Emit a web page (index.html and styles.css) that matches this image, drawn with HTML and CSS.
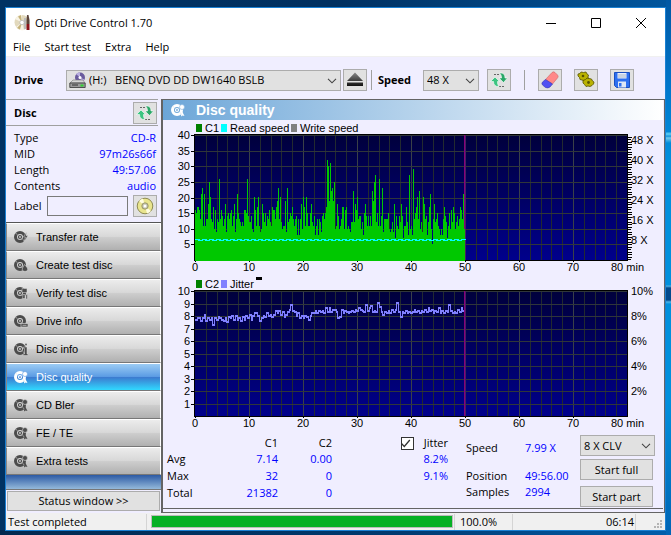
FILE: index.html
```html
<!DOCTYPE html>
<html lang="en">
<head>
<meta charset="utf-8">
<title>Opti Drive Control 1.70</title>
<link rel="stylesheet" href="styles.css">
</head>
<body>
<svg class="defs" aria-hidden="true">
  <defs>
    <linearGradient id="plot" x1="0" y1="0" x2="0" y2="1"><stop offset="0" stop-color="#00003c"/><stop offset="1" stop-color="#00008c"/></linearGradient>
    <linearGradient id="metal" x1="0" y1="0" x2="0" y2="1"><stop offset="0" stop-color="#888"/><stop offset="1" stop-color="#111"/></linearGradient>
    <symbol id="i-chevron" viewBox="0 0 10 6"><path d="M1 .8 5 4.8 9 .8" fill="none" stroke="#444" stroke-width="1.1"/></symbol>
    <symbol id="i-refresh" viewBox="0 0 18 18">
      <path d="M4 3.500h5M9 15.500h5" fill="none" stroke="#666" stroke-dasharray="2 1"/>
      <path d="M.5 10.500 5 6l4.500 4.500H7.500c0 2 .3 3.500 1.500 5-3.500.3-5.500-1.500-5.500-5z" fill="#3cc481" stroke="#fff" stroke-width=".6"/>
      <path d="M17.500 7 13.500 11.500 9 7h2.500c0-2-.5-3.500-2-5 4-.3 5.500 1.500 5.500 5z" fill="#2aa868" stroke="#fff" stroke-width=".6"/>
    </symbol>
    <symbol id="i-disc" viewBox="0 0 14 14">
      <circle cx="6" cy="7" r="4.500" fill="none" stroke="currentColor" stroke-width="3"/>
      <circle cx="6" cy="7" r="1.500" fill="none" stroke="currentColor" stroke-width="1.200"/>
      <path d="M3 4.500 1.800 3.200M9 9.500l1.500 1.500" stroke="#ddd" stroke-width=".8"/>
    </symbol>
  </defs>
</svg>
<div class="window">
  <header class="titlebar">
    <svg class="app-icon" viewBox="0 0 17 17"><circle cx="8" cy="8.500" r="7.500" fill="#e2d9bd"/><path d="M8 8.500 1 5A7.500 7.500 0 0 1 8 1zM8 8.500 10 16a7.500 7.500 0 0 1-8-3z" fill="#f8f3e4"/><path d="M8 8.500 4 2.500 7 1zM8 8.500 3 14l3 1.500z" fill="#c5b27a"/><circle cx="8" cy="8.500" r="2.200" fill="#fff" stroke="#aaa" stroke-width=".6"/><path d="M10 4h2v11h-2z" fill="#bbb"/><path d="M13 1h1.500l1 5v4h-3V6z" fill="#5a4238"/><path d="M12.500 10h3v6h-3z" fill="#8d1219"/></svg>
    <h1>Opti Drive Control 1.70</h1>
    <div class="caption">
      <button type="button" aria-label="Minimize"><svg viewBox="0 0 12 12"><path d="M1 6.500h10" stroke="#000"/></svg></button>
      <button type="button" aria-label="Maximize"><svg viewBox="0 0 12 12"><path d="M1.500 1.500h9v9h-9z" fill="none" stroke="#000"/></svg></button>
      <button type="button" aria-label="Close"><svg viewBox="0 0 12 12"><path d="m1 1 10 10M11 1 1 11" stroke="#000"/></svg></button>
    </div>
  </header>
  <nav class="menu"><button type="button">File</button><button type="button">Start test</button><button type="button">Extra</button><button type="button">Help</button></nav>

  <div class="toolbar">
    <label class="bold drive-label" for="drive">Drive</label>
    <div class="combo drive">
      <svg class="drive-icon" viewBox="0 0 17 17"><circle cx="11" cy="5.500" r="5" fill="#6a5c9e"/><path d="M11 5.500 7 2a5 5 0 0 1 4-1.500zM11 5.500l4.500 2a5 5 0 0 1-3 3z" fill="#b9aee0"/><circle cx="11" cy="5.500" r="1.500" fill="#fff"/><path d="M4 8h10l2 3H1z" fill="#d5d5d5" stroke="#777" stroke-width=".6"/><path d="M.8 11h15.400v4.500H.8z" fill="#9a9a9a" stroke="#333" stroke-width=".8"/><path d="M3 13h6" stroke="#333"/><path d="M11.500 12.500h3v2h-3z" fill="#2bd42b"/></svg>
      <select id="drive"><option>(H:)&nbsp;&nbsp; BENQ DVD DD DW1640 BSLB</option></select>
      <svg class="chevron"><use href="#i-chevron"/></svg>
    </div>
    <button class="tool eject" type="button" aria-label="Eject"><svg viewBox="0 0 18 18"><path d="M9 1.500 17 10H1zM1 11.500h16v3.500H1z" fill="url(#metal)"/></svg></button>
    <span class="sep"></span>
    <label class="bold speed-label" for="speed">Speed</label>
    <div class="combo speed"><select id="speed"><option>48 X</option></select><svg class="chevron"><use href="#i-chevron"/></svg></div>
    <button class="tool" type="button" aria-label="Refresh speeds"><svg><use href="#i-refresh"/></svg></button>
    <span class="sep wide"></span>
    <button class="tool spaced" type="button" aria-label="Erase"><svg viewBox="0 0 18 18"><path d="M4.500 8.500 11 1.500q1.500-1.300 3 0l2.500 2.500q1.200 1.200.2 2.700L11.500 13z" fill="#ff8888" stroke="#c66" stroke-width=".6"/><path d="M4.500 8.500 11.500 13 9 16q-2 1.500-4.500.5L1.500 14q-1.200-1.500 0-3z" fill="#4f4ff2" stroke="#3333b0" stroke-width=".6"/></svg></button>
    <button class="tool spaced" type="button" aria-label="Options"><svg viewBox="0 0 18 18"><g fill="#b9b200" stroke="#565200" stroke-width=".8"><path d="m1 3 2-.5L4 1l2.500.500L9 1l1 2 1.500 1-.5 2 .5 2-2.500.5L7.500 10 5 9l-2-.500L2.500 6.500 1 5z"/><path d="m6 9.500 2.500-1L10 7l2 .5 2.500.5 1 2 1.500 1-.5 2-1.500 1.500-2 1-2-.5-2 .5-1.500-2-1.500-1.500z"/></g><circle cx="6" cy="5" r="1.300" fill="#565200"/><circle cx="11.500" cy="11.500" r="1.400" fill="#565200"/></svg></button>
    <button class="tool spaced" type="button" aria-label="Save"><svg viewBox="0 0 18 18"><path d="M1.500 1.500h15v15h-13l-2-2z" fill="#2c6ff0" stroke="#1a4fc0"/><path d="M4.500 2h9v5.500h-9z" fill="#e8eefc"/><path d="M5 4h8M5 6h8" stroke="#9ab" stroke-width=".8"/><path d="M5 10.500h8v6H5z" fill="#dde6f5"/><path d="M6 12h2.500v3.500H6z" fill="#2c6ff0"/></svg></button>
  </div>

  <div class="body">
    <aside class="sidebar">
      <div class="disc-head"><h2 class="bold">Disc</h2><button class="tool" type="button" aria-label="Refresh disc"><svg><use href="#i-refresh"/></svg></button></div>
      <dl class="disc-info">
        <div><dt>Type</dt><dd>CD-R</dd></div>
        <div><dt>MID</dt><dd>97m26s66f</dd></div>
        <div><dt>Length</dt><dd>49:57.06</dd></div>
        <div><dt>Contents</dt><dd>audio</dd></div>
      </dl>
      <div class="label-row"><label for="label">Label</label><input id="label" type="text"><button class="tool" type="button" aria-label="Read label"><svg viewBox="0 0 18 18"><circle cx="9" cy="9" r="7.800" fill="#e9e58e" stroke="#77743a" stroke-width=".8"/><path d="M9 9 3 4a8 8 0 0 1 4-2.500zM9 9l6 5a8 8 0 0 1-4 2.500z" fill="#fffde0"/><circle cx="9" cy="9" r="3.200" fill="#c5c5b0" stroke="#77743a" stroke-width=".6"/><circle cx="9" cy="9" r="1.500" fill="#fff"/></svg></button></div>
      <nav class="tests">
        <button type="button"><svg viewBox="0 0 14 14"><use href="#i-disc"/><path d="m12.500 2-3 5h2l-1.500 5 4-6.500h-2z" fill="currentColor" stroke="#ddd" stroke-width=".5"/></svg>Transfer rate</button>
        <button type="button"><svg viewBox="0 0 14 14"><use href="#i-disc"/><path d="M10.500 6.500 13.500 10q1 3-2.500 3.500Q7.500 13 8.500 10z" fill="currentColor" stroke="#ddd" stroke-width=".6"/></svg>Create test disc</button>
        <button type="button"><svg viewBox="0 0 14 14"><use href="#i-disc"/><path d="M8 2.500h5v4H8zM9 8.500h2v4H8.500zM12 8.500h1.500v4.500H12z" fill="currentColor" stroke="#ddd" stroke-width=".5"/></svg>Verify test disc</button>
        <button type="button"><svg viewBox="0 0 14 14"><use href="#i-disc"/><path d="M7 9.500h7v3.500H7z" fill="currentColor" stroke="#ddd" stroke-width=".6"/><path d="M8.500 11.300h4" stroke="#ddd" stroke-width=".7"/></svg>Drive info</button>
        <button type="button"><svg viewBox="0 0 14 14"><use href="#i-disc"/><path d="M11 1.500h2v2h-2zM9.500 5H13v7h1v1.500H9V12h1.500V6.500h-1z" fill="currentColor" stroke="#ddd" stroke-width=".5"/></svg>Disc info</button>
        <button type="button" class="active" aria-current="page"><svg viewBox="0 0 14 14"><use href="#i-disc"/><circle cx="11" cy="4" r="2.500" fill="currentColor" stroke="#5a9be0" stroke-width=".6"/><path d="m10.500 7 3 6-2-.5-1.500 1z" fill="currentColor"/></svg>Disc quality</button>
        <button type="button"><svg viewBox="0 0 14 14"><use href="#i-disc"/><circle cx="11" cy="4" r="2.500" fill="currentColor" stroke="#ddd" stroke-width=".6"/><path d="m10.500 7 3 6-2-.5-1.500 1z" fill="currentColor"/></svg>CD Bler</button>
        <button type="button"><svg viewBox="0 0 14 14"><use href="#i-disc"/><circle cx="11" cy="4" r="2.500" fill="currentColor" stroke="#ddd" stroke-width=".6"/><path d="m10.500 7 3 6-2-.5-1.500 1z" fill="currentColor"/></svg>FE / TE</button>
        <button type="button"><svg viewBox="0 0 14 14"><use href="#i-disc"/><circle cx="11" cy="4" r="2.500" fill="currentColor" stroke="#ddd" stroke-width=".6"/><path d="m10.500 7 3 6-2-.5-1.500 1z" fill="currentColor"/></svg>Extra tests</button>
      </nav>
      <button class="push status-btn" type="button">Status window &gt;&gt;</button>
    </aside>

    <main class="panel">
      <div class="panel-in">
        <div class="panel-head"><svg viewBox="0 0 14 14"><use href="#i-disc"/><circle cx="11" cy="4" r="2.500" fill="#fff" stroke="#7fb2dd" stroke-width=".6"/><path d="m10.500 7 3 6-2-.5-1.500 1z" fill="#fff"/></svg><h2>Disc quality</h2></div>
        <svg class="chart" id="chart-c1" viewBox="163 120 500 157" role="img" aria-label="C1 errors"></svg>
        <svg class="chart" id="chart-jitter" viewBox="163 277 500 153" role="img" aria-label="C2 errors and jitter"></svg>
        <div class="results">
          <table class="stats">
            <thead><tr><td></td><th scope="col">C1</th><th scope="col">C2</th><th scope="col" class="jit"><label><input type="checkbox" checked><svg class="tick" viewBox="0 0 13 13"><path d="m2.500 6.500 2.800 3 5.500-6.500" fill="none" stroke="#333" stroke-width="1.300"/></svg>Jitter</label></th></tr></thead>
            <tbody>
              <tr><th scope="row">Avg</th><td>7.14</td><td>0.00</td><td>8.2%</td></tr>
              <tr><th scope="row">Max</th><td>32</td><td>0</td><td>9.1%</td></tr>
              <tr><th scope="row">Total</th><td>21382</td><td>0</td><td></td></tr>
            </tbody>
          </table>
          <dl class="progress-info">
            <dt class="first">Speed</dt><dd class="first">7.99 X</dd>
            <dt>Position</dt><dd>49:56.00</dd>
            <dt>Samples</dt><dd>2994</dd>
          </dl>
          <div class="actions">
            <div class="combo"><select aria-label="Test speed"><option>8 X CLV</option></select><svg class="chevron"><use href="#i-chevron"/></svg></div>
            <button class="push" type="button">Start full</button>
            <button class="push last" type="button">Start part</button>
          </div>
        </div>
      </div>
    </main>
  </div>

  <footer class="statusbar">
    <span class="msg">Test completed</span>
    <div class="bar" role="progressbar" aria-valuenow="100" aria-label="Test progress"><div class="fill"></div></div>
    <span class="pct">100.0%</span>
    <span class="time">06:14</span>
    <svg class="grip" viewBox="0 0 9 9"><path d="M6 0h2v2H6zM3 3h2v2H3zM6 3h2v2H6zM0 6h2v2H0zM3 6h2v2H3zM6 6h2v2H6z" fill="#b4b4b4"/></svg>
  </footer>
</div>
<script src="charts.js"></script>
</body>
</html>
```
FILE: styles.css
```css
* { box-sizing: border-box; }
body {
  margin: 0;
  min-height: 100vh;
  padding: 7px 5px 4px;
  font: 11px/16px "Open Sans", "Noto Sans", sans-serif;
  color: #000;
  background:
    linear-gradient(#0000 132px, #4fc3ee 133px, #4fc3ee 135px, #0b8fd8 136px, #6fc9ea 138px, #0000 143px, #0000 285px, #4fb4e6 286px, #024a8c 288px, #024a8c 300px, #4fb4e6 302px, #0000 304px) right / 5px 100% no-repeat,
    linear-gradient(#0058a4, #0078cc 90px, #0090dc 160px, #0090dc 400px, #0064b4) right / 5px 100% no-repeat,
    linear-gradient(90deg, #02284e, #003a70 60%, #005eac) bottom / 100% 5px no-repeat,
    linear-gradient(90deg, #003262, #003060 50%, #00569e);
}
h1, h2, dl, dd { margin: 0; font-size: inherit; }
button, select, input { font: inherit; color: inherit; }
.defs { position: absolute; width: 0; height: 0; }
.bold { font-weight: 700; }
.window {
  display: flex;
  flex-direction: column;
  min-height: calc(100vh - 11px);
  border: 1px solid #1a80d2;
  background: #f0eeff;
}

.titlebar { display: flex; align-items: center; height: 29px; padding: 0 2px 0 8px; background: #fff; }
.app-icon { width: 17px; height: 17px; margin-right: 4px; }
.titlebar h1 { flex: 1; font-weight: 400; font-size: 11px; }
.caption { display: flex; }
.caption button { width: 45px; height: 29px; border: 0; padding: 0; background: none; }
.caption svg { width: 12px; height: 12px; display: block; margin: auto; }
.menu { display: flex; gap: 14px; padding-left: 7px; height: 20px; background: #fff; border-bottom: 1px solid #f0f0f0; }
.menu button { border: 0; padding: 0; background: none; line-height: 20px; }

.toolbar { display: flex; align-items: center; height: 42px; padding: 4px 31px 0 8px; }
.combo { position: relative; display: flex; }
.combo select {
  appearance: none;
  width: 100%;
  height: 21px;
  padding: 0 16px 0 3px;
  border: 1px solid #acacac;
  border-radius: 0;
  background: #e1e1e1;
}
.chevron { position: absolute; right: 4px; top: 8px; width: 10px; height: 6px; pointer-events: none; }
.drive-label { width: 52px; }
.drive { flex: 1; }
.drive select { padding-left: 22px; }
.drive-icon { position: absolute; left: 3px; top: 2px; width: 17px; height: 17px; }
.tool {
  flex: none;
  display: grid;
  place-items: center;
  width: 24px;
  height: 22px;
  padding: 0;
  border: 1px solid #acacac;
  background: #e1e1e1;
}
.tool svg { width: 18px; height: 18px; }
.eject { margin: 0 4px 0 2px; }
.sep { width: 1px; height: 20px; background: #a0a0a0; }
.sep.wide { margin: 0 1px 0 13px; }
.speed-label { width: 45px; margin-left: 6px; }
.speed { width: 56px; margin-right: 8px; }
.tool.spaced { margin-left: 12px; }

.body { flex: 1; display: flex; }
.sidebar { width: 155px; display: flex; flex-direction: column; }
.disc-head {
  display: flex;
  justify-content: space-between;
  align-items: center;
  height: 27px;
  margin-right: 3px;
  padding: 0 1px 0 8px;
  border-top: 1px solid #a0a0a0;
  border-bottom: 1px solid #a0a0a0;
}
.disc-info { padding: 4px 5px 0 8px; }
.disc-info div { display: flex; justify-content: space-between; }
dd, .stats tbody td { color: #00f; }
.label-row { display: flex; align-items: center; justify-content: space-between; height: 28px; padding: 0 5px 4px 8px; }
.label-row input { width: 81px; height: 20px; margin: 0 5px; border: 1px solid #7a7a7a; background: #f0eeff; }
.label-row label { flex: 1; }
.tests { flex: 1; border-top: 1px solid #555; background: linear-gradient(#2c5aa4, #2c5aa4 252px, #9cc0de 267px); border-bottom: 1px solid #777; }
.tests button {
  display: flex;
  align-items: center;
  width: 100%;
  height: 28px;
  padding: 0 0 0 7px;
  border: 1px solid #fff;
  border-bottom-color: #777;
  border-left-color: #888;
  background: linear-gradient(#ececec, #d8d8d8 48%, #cdcdcd 52%, #b0b0b0);
  font: 11px/14px "Liberation Sans", sans-serif;
}
.tests svg { width: 14px; height: 14px; margin-right: 8px; color: #4c4c4c; }
.tests .active { color: #fff; background: linear-gradient(#9cccf4, #5c9ce4 48%, #3c7cd0 52%, #30d8ff); }
.tests .active svg { color: #fff; }
.push { height: 21px; padding: 0; border: 1px solid #acacac; background: #e1e1e1; line-height: 18px; }
.status-btn { height: 20px; margin: 1px 1px 2px; }

.panel { flex: 1; min-width: 0; border: solid #646464; border-width: 1px 1px 1px 2px; padding: 0 1px 2px 0; }
.panel-in { border-bottom: 1px solid #646464; }
.panel-head { display: flex; align-items: center; height: 20px; padding-left: 8px; color: #fff; background: linear-gradient(90deg, #6ca6d8, #fff); }
.panel-head svg { width: 14px; height: 14px; margin-right: 11px; }
.panel-head h2 { font: 700 14px/20px "Liberation Sans", sans-serif; }
.chart { display: block; width: 100%; font: 11px "Liberation Sans", sans-serif; shape-rendering: crispEdges; }

.results { display: flex; height: 78px; padding-top: 5px; }
.stats { border-collapse: collapse; width: 285px; height: 66px; table-layout: fixed; text-align: right; }
.stats th, .stats td { padding: 0; font-weight: 400; }
.stats td:first-child, .stats tbody th { width: 60px; text-align: left; padding-left: 4px; }
.stats th:nth-child(2) { width: 55px; }
.stats th:nth-child(3) { width: 54px; }
.jit label { display: flex; align-items: center; justify-content: flex-end; position: relative; }
.jit input { appearance: none; width: 13px; height: 13px; margin: 0 10px 0 0; border: 1px solid #333; background: #fff; }
.jit .tick { position: absolute; right: 36px; width: 13px; height: 13px; }
.progress-info { display: grid; grid-template-columns: 59px 1fr; flex: 1; padding: 5px 0 0 18px; align-content: start; }
.progress-info .first { margin-bottom: 12px; }
.actions { width: 75px; margin-right: 8px; display: flex; flex-direction: column; gap: 3px; }
.actions .push { width: 73px; }
.actions .last { margin-top: 3px; }

.statusbar { display: flex; align-items: center; height: 17px; background: #f0f0f0; font-size: 11px; }
.msg { width: 141px; padding-left: 2px; border-right: 1px solid #d4d4d4; }
.bar { flex: 1; height: 13px; margin: 0 1px 0 4px; border: 1px solid #bcbcbc; background: #e6e6e6; }
.fill { height: 100%; background: #06b025; }
.pct { width: 59px; padding-left: 5px; border: solid #d4d4d4; border-width: 0 1px; }
.time { width: 123px; text-align: right; padding-right: 1px; border-right: 1px solid #d4d4d4; }
.grip { width: 9px; height: 9px; margin: 6px 2px 0 18px; }
```
FILE: charts.js
```javascript
// C1 errors, one value per plotted column
const c1 = [
  16,15,17,17,16,13,21,23,11,21, 11,13,13,18,25,20,13,12,17,10, 16,9,13,12,26,13,16,14,11,13,
  18,9,14,15,13,15,16,11,14,18, 9,13,21,15,13,12,11,12,11,16, 16,15,26,14,12,12,14,10,9,20,
  16,11,17,20,11,9,10,18,15,12, 15,11,14,13,16,12,11,17,16,16, 13,17,19,23,13,20,12,10,11,11,
  19,9,23,12,13,15,14,17,13,11, 13,14,8,13,8,13,18,10,20,17, 11,20,15,11,11,15,18,12,11,14,
  8,11,13,8,13,12,9,14,15,13, 15,17,32,30,19,31,22,23,19,25, 10,11,18,14,10,11,13,17,17,10,
  16,17,10,11,10,9,12,12,22,12, 18,16,20,13,14,14,10,12,8,15, 18,14,11,14,11,14,11,22,19,25,
  27,12,15,11,26,11,14,23,9,13, 13,13,13,15,10,9,10,12,9,18, 7,14,11,10,14,12,18,14,7,11,
  11,17,12,8,27,10,11,8,29,13, 15,17,20,13,22,10,12,9,20,18, 13,14,8,12,17,21,10,5,13,18,
  12,13,15,11,10,8,10,8,13,17, 14,12,7,11,15,10,16,12,17,15, 10,12,14,11,13,17,16,13,21,10
];
// Jitter in percent, one value per two columns
const jitter = [
  7.8,7.9,7.9,7.7,7.9,8.2,7.7,7.9,7.8,7.9, 7.4,7.9,7.8,8.0,7.9,7.8,7.7,7.9,7.6,8.0, 7.9,8.1,7.8,8.1,7.8,7.9,7.7,8.0,7.8,8.1,
  7.9,8.2,7.8,8.1,8.3,8.3,8.1,7.7,7.9,8.1, 8.0,8.3,8.1,8.2,8.0,8.2,8.5,8.3,8.5,8.2, 8.4,8.0,8.2,8.4,8.6,9.0,8.5,8.4,8.1,8.3,
  7.9,8.1,7.9,8.1,8.0,7.8,8.1,8.3,8.3,8.5, 8.3,8.5,8.4,8.5,8.3,8.7,8.4,8.7,8.4,8.6, 8.6,8.4,7.9,8.0,8.6,8.3,8.5,8.4,8.3,8.4,
  8.5,8.4,8.6,8.5,8.7,8.6,8.5,8.4,9.0,8.5, 8.7,8.9,8.4,8.5,8.4,9.1,8.8,8.4,8.2,8.4, 8.3,8.5,8.3,8.6,8.4,8.6,9.1,8.4,8.0,8.4,
  8.3,8.5,8.3,8.4,8.3,8.4,8.6,8.4,8.5,8.3, 8.5,8.4,8.6,8.4,8.7,8.5,8.6,8.3,8.5,8.4, 8.7,8.3,8.5,8.3,8.5,8.4,9.0,8.5,8.3,8.4,
  8.3,8.6,8.4,8.7,8.5
];

const text = (x, y, s, anchor) => `<text x="${x}" y="${y}" text-anchor="${anchor}">${s}</text>`;
const rect = (x, y, w, h, fill) => `<rect x="${x}" y="${y}" width="${w}" height="${h}" fill="${fill}"/>`;
const LEFT = 195, WIDTH = 433, HEIGHT = 125;
const minute = m => Math.round(LEFT + m * 5.4);

function frame(top, rows) {
  let s = rect(LEFT, top, WIDTH, HEIGHT + 1, 'url(#plot)');
  for (let m = 2; m < 80; m += 2) s += rect(minute(m), top, 1, HEIGHT, m % 10 ? '#222a30' : '#3a4048');
  for (let r = 0; r < rows; r++) s += rect(LEFT, top + Math.round(r * HEIGHT / rows), WIDTH, 1, '#30363a');
  return s;
}

function axes(top, rows, step) {
  const bottom = top + HEIGHT;
  let s = rect(464, top, 1, HEIGHT, '#88007c') + rect(465, top, 1, HEIGHT, '#4a2060');
  s += rect(LEFT - 1, top - 1, WIDTH + 1, 1, '#000') + rect(LEFT - 1, top, 1, HEIGHT + 1, '#000')
    + rect(LEFT, bottom, WIDTH, 1, '#000') + rect(LEFT + WIDTH - 1, top, 1, HEIGHT + 1, '#000');
  for (let r = 0; r < rows; r++) {
    const y = top + Math.round(r * HEIGHT / rows);
    s += rect(191, y, 3, 1, '#000') + text(190, y + 4, (rows - r) * step, 'end');
  }
  for (let m = 0; m < 80; m += 10) s += rect(minute(m), bottom, 1, 2, '#000') + text(minute(m), bottom + 11, m, 'middle');
  return s + text(611, bottom + 11, '80 min', 'start');
}

function legend(y, items) {
  return items.map(([x, fill, label]) => rect(x, y, 6, 8, fill) + text(x + 9, y + 8, label, 'start')).join('');
}

let one = frame(135, 8);
one += axes(135, 8, 5);
one += `<path fill="#00c800" d="M195 261${c1.map((v, i) => `V${Math.round(260 - v * 3.13)}H${196 + i}`).join('')}V261z"/>`;
// Read speed flickers between two pixel rows
for (let i = 0; i < 269; i += 7) one += rect(LEFT + i, 239, 5, 1, '#00ffff') + rect(LEFT + i + 3, 240, Math.min(5, 266 - i), 1, '#00ffff');
for (let x = 0; x < 50; x++) one += rect(628, Math.round(259 - x * 2.5), x % 4 ? 4 : 3, 1, '#000');
for (let x = 8; x <= 48; x += 8) one += text(631, 264 - x * 2.5, x + ' X', 'start');
one += legend(124, [[196, '#008000', 'C1'], [221, '#00ffff', 'Read speed'], [291, '#808080', 'Write speed']]);
document.getElementById('chart-c1').innerHTML = one;

let two = frame(291, 10);
// Each sample is a short bar that reaches the level of the one before it
jitter.forEach((v, i) => {
  const x0 = LEFT + Math.round(i * 269 / jitter.length);
  const x1 = LEFT + Math.round((i + 1) * 269 / jitter.length);
  const y = Math.round(416 - v * 12.5);
  const before = Math.round(416 - (jitter[i - 1] ?? v) * 12.5);
  two += rect(x0, Math.min(y, before), 1, Math.abs(y - before) + 2, '#8080ff') + rect(x0, y, x1 - x0, 2, '#8080ff');
});
two += axes(291, 10, 1);
for (let p = 2; p <= 10; p += 2) two += text(631, 420 - p * 12.5, p + '%', 'start');
two += legend(280, [[196, '#008000', 'C2'], [221, '#8080ff', 'Jitter']]) + rect(256, 277, 6, 3, '#000');
document.getElementById('chart-jitter').innerHTML = two;
```
